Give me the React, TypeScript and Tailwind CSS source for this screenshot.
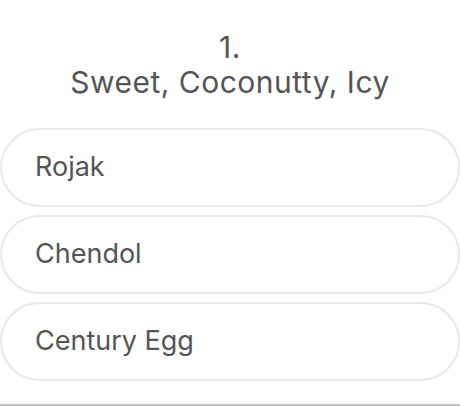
import React from "react";

const options = ["Rojak", "Chendol", "Century Egg"];

export default function App() {
  return (
    <div
      className="w-[460px] h-[406px] bg-white flex flex-col overflow-hidden"
      style={{ fontFamily: "Inter, 'Open Sans', sans-serif" }}
    >
      <div className="flex flex-col items-center pt-[30px] text-[30px] leading-[35px] tracking-[0.5px] text-[#555555]">
        <div>1.</div>
        <div>Sweet, Coconutty, Icy</div>
      </div>
      <div className="mt-[28px] flex flex-col gap-[8px]">
        {options.map((o) => (
          <div
            key={o}
            className="h-[79px] w-[460px] rounded-[40px] border-2 border-[#e8e8e8] flex items-center pl-[33px] text-[27px] text-[#555555]"
          >
            {o}
          </div>
        ))}
      </div>
      <div className="mt-auto h-[2px] bg-[#c4c4c4]" />
    </div>
  );
}
